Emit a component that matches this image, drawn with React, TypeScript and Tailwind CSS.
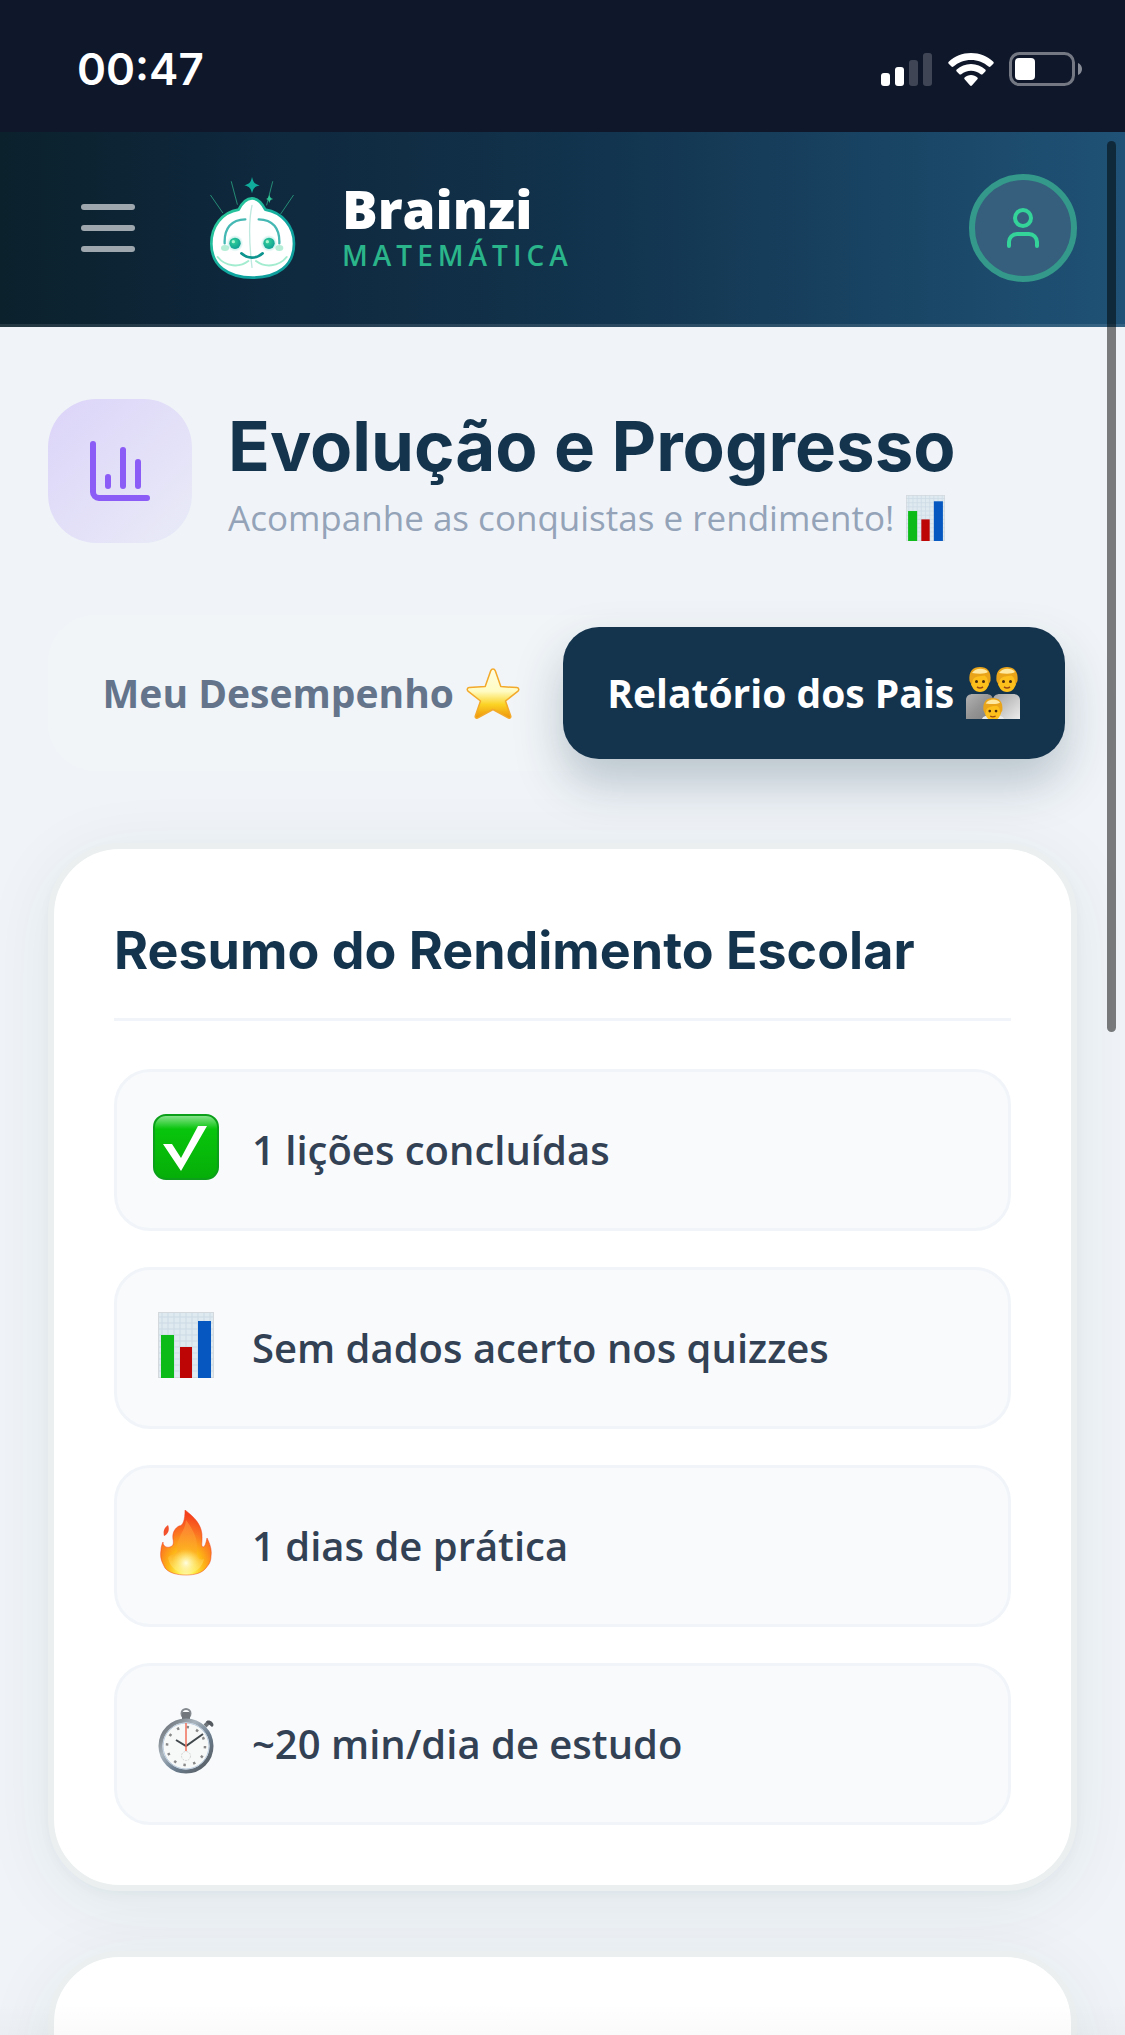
import { ReactNode, useState } from "react";
import { ChartColumn, User } from "lucide-react";

interface SummaryItem {
  id: string,
  icon: ReactNode,
  text: string
}

const StatusBar = () => (
  <div className="flex h-[132px] items-center justify-between bg-[#0f172a] pl-[77px] pr-[42px] pt-[6px] text-white">
    <span className="font-['Inter',sans-serif] text-[44px] font-semibold leading-none">00:47</span>
    <div className="flex items-center gap-[15px]">
      <svg className="h-[33px] w-[52px]" viewBox="0 0 52 33" fill="currentColor">
        <rect x="0" y="20" width="9" height="13" rx="3" />
        <rect x="14" y="14" width="9" height="19" rx="3" />
        <rect x="28" y="7" width="9" height="26" rx="3" opacity="0.2" />
        <rect x="42" y="0" width="9" height="33" rx="3" opacity="0.2" />
      </svg>
      <svg className="h-[33px] w-[46px]" viewBox="0 0 46 33" fill="currentColor">
        <path d="M23 0C14.4 0 6.6 3.3.7 8.700c-.6.600-.6 1.400 0 2l2.800 2.800c.5.600 1.300.600 1.900.1C10.100 9.500 16.200 7 23 7s12.900 2.500 17.600 6.600c.6.500 1.400.5 1.900-.1l2.800-2.800c.6-.6.600-1.400 0-2C39.400 3.300 31.600 0 23 0z" />
        <path d="M23 11c-5.500 0-10.500 2.100-14.300 5.600-.6.500-.6 1.400 0 2l2.700 2.600c.5.500 1.300.500 1.900.1 2.600-2.300 6-3.600 9.700-3.600s7.100 1.300 9.700 3.600c.6.400 1.400.4 1.900-.1l2.700-2.600c.6-.6.600-1.500 0-2C33.500 13.100 28.500 11 23 11z" />
        <path d="M23 22c-2.500 0-4.700.9-6.400 2.400-.5.500-.5 1.300 0 1.800l5.500 6.300c.5.600 1.300.600 1.800 0l5.500-6.300c.5-.5.500-1.300 0-1.800C27.700 22.900 25.500 22 23 22z" />
      </svg>
      <svg className="h-[34px] w-[74px]" viewBox="0 0 74 34">
        <rect x="1.5" y="1.5" width="63" height="31" rx="9" fill="none" stroke="#fff" strokeOpacity="0.42" strokeWidth="3" />
        <rect x="6" y="6" width="20" height="22" rx="4" fill="#fff" />
        <path d="M69 11c2.700 1.200 4 3.500 4 6s-1.300 4.800-4 6z" fill="#fff" fillOpacity="0.5" />
      </svg>
    </div>
  </div>
);

const Logo = () => (
  <svg className="h-[104px] w-[88px]" viewBox="54 48 264 312" fill="none" strokeLinecap="round" strokeLinejoin="round">
    <defs>
      <linearGradient id="outline" x1="0" y1="0" x2="1" y2="1">
        <stop offset="0" stopColor="#34d399" />
        <stop offset="0.6" stopColor="#0ea5a0" />
        <stop offset="1" stopColor="#0f9a9a" />
      </linearGradient>
      <radialGradient id="eye" cx="0.4" cy="0.35" r="0.7">
        <stop offset="0" stopColor="#34d399" />
        <stop offset="1" stopColor="#0d9c94" />
      </radialGradient>
      <radialGradient id="glow">
        <stop offset="0.5" stopColor="#10b9a0" stopOpacity="0.35" />
        <stop offset="1" stopColor="#10b9a0" stopOpacity="0" />
      </radialGradient>
    </defs>
    <g stroke="#2aa583" strokeWidth="3" opacity="0.8">
      <path d="M62 106 98 158M124 65l18 68M248 65l-18 70M310 106l-38 56" />
    </g>
    <path d="M186 115c-16 0-28 10-40 34-50 8-82 50-82 102 0 66 50 102 124 102s124-36 124-102c0-52-36-94-86-102-12-24-24-34-40-34z" fill="#fff" stroke="url(#outline)" strokeWidth="8" />
    <path d="M186 136c-9 40-9 110 0 186" stroke="#bfe9df" strokeWidth="4" />
    <path d="M104 250c-2-44 20-72 62-72M206 178c42 0 64 28 62 72" stroke="#45b8b4" strokeWidth="7" />
    <path d="M83 291c24 30 66 32 92 12M290 291c-24 30-66 32-92 12" stroke="#a3ecd0" strokeWidth="6" />
    <path d="M154 280c18 17 46 17 64 0" stroke="#0d948f" strokeWidth="8" />
    <ellipse cx="105" cy="264" rx="12" ry="9" fill="#b5edd7" />
    <ellipse cx="268" cy="264" rx="12" ry="9" fill="#b5edd7" />
    <circle cx="135" cy="250" r="25" fill="url(#glow)" />
    <circle cx="237" cy="250" r="25" fill="url(#glow)" />
    <circle cx="135" cy="250" r="17" fill="url(#eye)" />
    <circle cx="237" cy="250" r="17" fill="url(#eye)" />
    <circle cx="130" cy="245" r="5" fill="#a7f3d0" />
    <circle cx="232" cy="245" r="5" fill="#a7f3d0" />
    <path d="M186 51c4 17 7 20 23 25-16 5-19 8-23 24-4-16-7-19-23-24 16-5 19-8 23-25z" fill="#10ad9d" />
    <path d="M238 103c2 10 4 12 12 14-8 2-10 4-12 13-2-9-4-11-10-13 6-2 8-4 10-14z" fill="#2fc795" />
  </svg>
);

const ChartEmoji = ({ className }: { className: string }) => (
  <svg className={className} viewBox="0 0 56 66">
    <rect width="56" height="66" fill="#dfe9f0" />
    <path d="M4 0v66M10 0v66M16 0v66M22 0v66M28 0v66M34 0v66M40 0v66M46 0v66M52 0v66M0 5h56M0 11h56M0 17h56M0 23h56M0 29h56M0 35h56M0 41h56M0 47h56M0 53h56M0 59h56" stroke="#cddbe5" strokeWidth="1" />
    <rect x="0.5" y="0.5" width="55" height="65" fill="none" stroke="#d3d9dd" />
    <rect x="3" y="23" width="13" height="43" fill="#0dbb18" />
    <rect x="22" y="35" width="12" height="31" fill="#bd0505" />
    <rect x="40" y="9" width="13" height="57" fill="#0658c0" />
  </svg>
);

const StarEmoji = () => (
  <svg className="h-[51px] w-[54px]" viewBox="0 0 54 51">
    <defs>
      <linearGradient id="star" x1="0" y1="0" x2="0" y2="1">
        <stop offset="0" stopColor="#fffde0" />
        <stop offset="0.45" stopColor="#fffcc4" />
        <stop offset="0.72" stopColor="#fbd324" />
        <stop offset="1" stopColor="#ee930b" />
      </linearGradient>
    </defs>
    <path d="M24.800 2.600c.9-2 3.500-2 4.400 0l5.600 16 16 1c2 .2 2.600 2.200 1.200 3.500L39.500 33l5.200 15c.4 1.800-1 2.800-2.600 1.900L27 41.500l-15.100 8.400c-1.600.9-3-.1-2.600-1.900l5.200-15L2 23.100C.6 21.800 1.200 19.800 3.200 19.600l16-1z" fill="url(#star)" stroke="#f3a92a" strokeWidth="1.5" strokeLinejoin="round" />
  </svg>
);

const FamilyEmoji = () => (
  <svg className="h-[52px] w-[54px]" viewBox="0 0 54 52">
    <defs>
      <linearGradient id="body" x1="0" y1="0" x2="1" y2="1">
        <stop offset="0" stopColor="#b3b3b3" />
        <stop offset="0.5" stopColor="#949494" />
        <stop offset="1" stopColor="#808080" />
      </linearGradient>
      <linearGradient id="bodyLight" x1="0" y1="0" x2="1" y2="1">
        <stop offset="0" stopColor="#a3a3a3" />
        <stop offset="1" stopColor="#ececec" />
      </linearGradient>
      <g id="face">
        <ellipse cx="11" cy="14" rx="9.5" ry="11" fill="#fcbf1c" />
        <path d="M.5 14C-.5 4 4 0 11 0s11.500 4 10.500 14l-2.500 4c.5-5-1-8-3.500-9.500C11 9 5.500 9.500 4 12.500c-.7 1.500-1 3-1 5.500z" fill="#e9a41a" />
        <path d="M3 6c3-5 12-6 16-1-3 2-9 2-16 1z" fill="#ffe9a0" />
        <circle cx="7.5" cy="14.5" r="1.5" fill="#4a2d10" />
        <circle cx="14.5" cy="14.5" r="1.5" fill="#4a2d10" />
        <path d="M8 20c2 1.300 4 1.300 6 0" stroke="#9a4a12" strokeWidth="1.5" fill="none" />
      </g>
    </defs>
    <path d="M0 52V33c0-4 3-6 7-6h13c4 0 7 2 7 6v19z" fill="url(#body)" />
    <path d="M27 52V33c0-4 3-6 7-6h13c4 0 7 2 7 6v19z" fill="url(#bodyLight)" />
    <use href="#face" x="3" y="0" />
    <use href="#face" x="30" y="0" />
    <path d="M16 52c1-3 5-4 11-4s10 1 11 4z" fill="#e8eaec" />
    <g transform="translate(17 31) scale(.9)">
      <use href="#face" />
    </g>
  </svg>
);

const CheckEmoji = () => (
  <svg className="h-[66px] w-[66px]" viewBox="0 0 66 66">
    <defs>
      <linearGradient id="check" x1="0" y1="0" x2="0" y2="1">
        <stop offset="0" stopColor="#8fe594" />
        <stop offset="0.22" stopColor="#08c50c" />
        <stop offset="1" stopColor="#06ae08" />
      </linearGradient>
    </defs>
    <rect x="1" y="1" width="64" height="64" rx="12" fill="url(#check)" stroke="#0ca01a" strokeWidth="2" />
    <path d="M10 30h9l9 14L45 12h9L28 57z" fill="#fff" />
  </svg>
);

const FireEmoji = () => (
  <svg className="h-[66px] w-[52px]" viewBox="0 0 52 66">
    <defs>
      <radialGradient id="fire" cx="0.5" cy="0.92" r="0.85">
        <stop offset="0" stopColor="#fffbd0" />
        <stop offset="0.18" stopColor="#fff04a" />
        <stop offset="0.42" stopColor="#fdb515" />
        <stop offset="0.7" stopColor="#fb7422" />
        <stop offset="1" stopColor="#f4401c" />
      </radialGradient>
      <radialGradient id="core">
        <stop offset="0" stopColor="#fffde0" />
        <stop offset="1" stopColor="#fff27a" stopOpacity="0" />
      </radialGradient>
      <linearGradient id="flame" x1="0" y1="0" x2="0" y2="1">
        <stop offset="0" stopColor="#fd8a3c" />
        <stop offset="0.6" stopColor="#fdab24" />
        <stop offset="1" stopColor="#fff27a" />
      </linearGradient>
    </defs>
    <path d="M25 0c9 7 18 15 17 29 0 5-1 7 1 8 2 0 3-4 4-9 3 6 5 12 4 18 0 4-1 6-2 8l-3 4C42 63 35 65 26 65S9 63 5 58l-2-4c-2-4-3-8-2-14 0-3 1-6 2-8 0 4 3 6 7 5 3-1 4-3 3-8-1-6 2-11 6-13 4 0 6-6 6-16z" fill="url(#fire)" stroke="#f1411d" strokeWidth="0.5" />
    <path d="M26 10c-1 12-9 16-9 30 0 6-7 3-9 8 2 9 9 15 18 15s16-5 18-14c-5 2-8-2-7-9C38 28 32 18 26 10z" fill="url(#flame)" opacity="0.7" />
    <circle cx="26" cy="53" r="14" fill="url(#core)" />
    <path d="M8 15c-4 3-5 6-4 11 4-2 6-6 4-11z" fill="#f3502c" />
  </svg>
);

const StopwatchEmoji = () => (
  <svg className="h-[66px] w-[56px]" viewBox="0 0 56 66">
    <defs>
      <linearGradient id="rim" x1="0" y1="0" x2="1" y2="1">
        <stop offset="0" stopColor="#5d6166" />
        <stop offset="0.35" stopColor="#a9b4bd" />
        <stop offset="0.6" stopColor="#6d7f91" />
        <stop offset="1" stopColor="#54585c" />
      </linearGradient>
    </defs>
    <circle cx="28" cy="5.5" r="4.5" fill="none" stroke="#858a90" strokeWidth="2" />
    <rect x="24" y="4" width="8" height="8" rx="1" fill="#70767c" />
    <path d="m47 18 4-4" stroke="#6e7378" strokeWidth="4" />
    <path d="M48 14c1-2 4-2 6 0s2 4 0 5z" fill="#555a60" />
    <circle cx="28" cy="38" r="25.5" fill="#f7f8f8" stroke="url(#rim)" strokeWidth="4" />
    <circle cx="28" cy="38" r="23" fill="none" stroke="#b6c9dc" strokeWidth="1" />
    <circle cx="28" cy="38" r="19" fill="none" stroke="#888" strokeWidth="2.5" strokeDasharray="2.5 7.45" />
    <circle cx="28" cy="48" r="4.5" fill="none" stroke="#d5d5d5" strokeDasharray="2 1" />
    <path d="m18 32 10 6 17-12" fill="none" stroke="#42494d" strokeWidth="2" />
    <path d="M28 15v28" stroke="#f0705c" strokeWidth="1.5" />
  </svg>
);

const summaryItems: SummaryItem[] = [
  { id: "lessons", icon: <CheckEmoji />, text: "1 lições concluídas" },
  { id: "quizzes", icon: <ChartEmoji className="h-[66px] w-[56px]" />, text: "Sem dados acerto nos quizzes" },
  { id: "streak", icon: <FireEmoji />, text: "1 dias de prática" },
  { id: "time", icon: <StopwatchEmoji />, text: "~20 min/dia de estudo" },
];

const Header = () => (
  <header className="flex items-center border-b-[3px] border-white/10 bg-[linear-gradient(90deg,#0b212c_0%,#0e263a_18%,#12344e_54%,#1f5276_100%)] bg-origin-border py-[42px] pl-[81px] pr-12">
    <button aria-label="Abrir menu" className="flex w-[54px] flex-col gap-[15px]">
      <span className="h-[6px] w-full rounded-full bg-white/60" />
      <span className="h-[6px] w-full rounded-full bg-white/60" />
      <span className="h-[6px] w-full rounded-full bg-white/60" />
    </button>
    <a href="#" className="ml-[73px] flex items-center gap-[46px]">
      <Logo />
      <span className="flex flex-col">
        <span className="text-[53px] font-extrabold leading-[54px] text-white">Brainzi</span>
        <span className="text-[28px] font-semibold leading-[38px] tracking-[5px] text-[#2bb58a]">MATEMÁTICA</span>
      </span>
    </a>
    <button aria-label="Perfil" className="ml-auto flex size-[108px] items-center justify-center rounded-full border-[6px] border-[#34998a] bg-[#355f7d]">
      <User className="size-12 text-[#34d399]" />
    </button>
  </header>
);

const App = () => {
  const [tab, setTab] = useState("parents");

  const tabClass = (active: boolean) =>
    `flex flex-1 items-center justify-center gap-3 whitespace-nowrap rounded-[36px] py-9 text-[39px] font-bold leading-[60px] ${
      active ? "bg-[#14344d] text-white shadow-[0_24px_48px_rgba(20,52,77,0.25)]" : "text-[#64748b]"
    }`;

  return (
    <div className="relative h-screen overflow-hidden bg-[#f0f4f8] font-['Open_Sans',sans-serif]">
      <StatusBar />
      <Header />

      <main className="px-12 pt-[72px]">
        <div className="flex items-center gap-9">
          <div className="flex size-36 items-center justify-center rounded-[48px] bg-gradient-to-br from-[#dcd4f9] to-[#e9ebf7]">
            <ChartColumn className="size-[72px] text-[#8b5cf6]" />
          </div>
          <div>
            <h1 className="font-['Inter',sans-serif] text-[69px] font-bold leading-[94px] text-[#14344d]">Evolução e Progresso</h1>
            <p className="flex items-center gap-3 text-[35px] font-medium leading-[50px] text-[#94a3b8]">
              Acompanhe as conquistas e rendimento!
              <ChartEmoji className="h-[46px] w-[39px]" />
            </p>
          </div>
        </div>

        <div className="mt-[72px] flex rounded-[48px] bg-[#f1f5f8] p-3">
          <button onClick={() => setTab("mine")} className={tabClass(tab === "mine")}>
            Meu Desempenho <StarEmoji />
          </button>
          <button onClick={() => setTab("parents")} className={tabClass(tab === "parents")}>
            Relatório dos Pais <FamilyEmoji />
          </button>
        </div>

        {/* School summary */}
        <section className="mt-[72px] rounded-[72px] border-[6px] border-[#ebefef] bg-white p-[60px] shadow-[0_12px_72px_rgba(20,52,77,0.07),0_4px_12px_rgba(20,52,77,0.03)]">
          <h2 className="border-b-[3px] border-[#f1f5f9] pb-[31px] pt-[6px] font-['Inter',sans-serif] text-[52px] font-bold leading-[72px] text-[#14344d]">
            Resumo do Rendimento Escolar
          </h2>
          <ul className="mt-12 flex flex-col gap-9">
            {summaryItems.map((item) => (
              <li key={item.id} className="flex h-[162px] items-center rounded-[36px] border-[3px] border-[#f1f5f9] bg-[#f8fafc] px-9">
                <span className="mr-[33px] flex w-[66px] justify-center pb-[6px]">{item.icon}</span>
                <span className="text-[40px] font-semibold leading-[60px] text-[#334155]">{item.text}</span>
              </li>
            ))}
          </ul>
        </section>

        <section className="mt-[60px] h-96 rounded-[72px] border-[6px] border-[#ebefef] bg-white shadow-[0_12px_72px_rgba(20,52,77,0.07)]" />
      </main>

      {/* Bottom fade */}
      <div className="pointer-events-none absolute inset-x-0 bottom-0 h-8 bg-gradient-to-b from-transparent to-black/[0.02]" />

      {/* Scroll indicator */}
      <div className="absolute right-[9px] top-[141px] h-[891px] w-[9px] rounded-full bg-black/50" />
    </div>
  );
};

export default App;
